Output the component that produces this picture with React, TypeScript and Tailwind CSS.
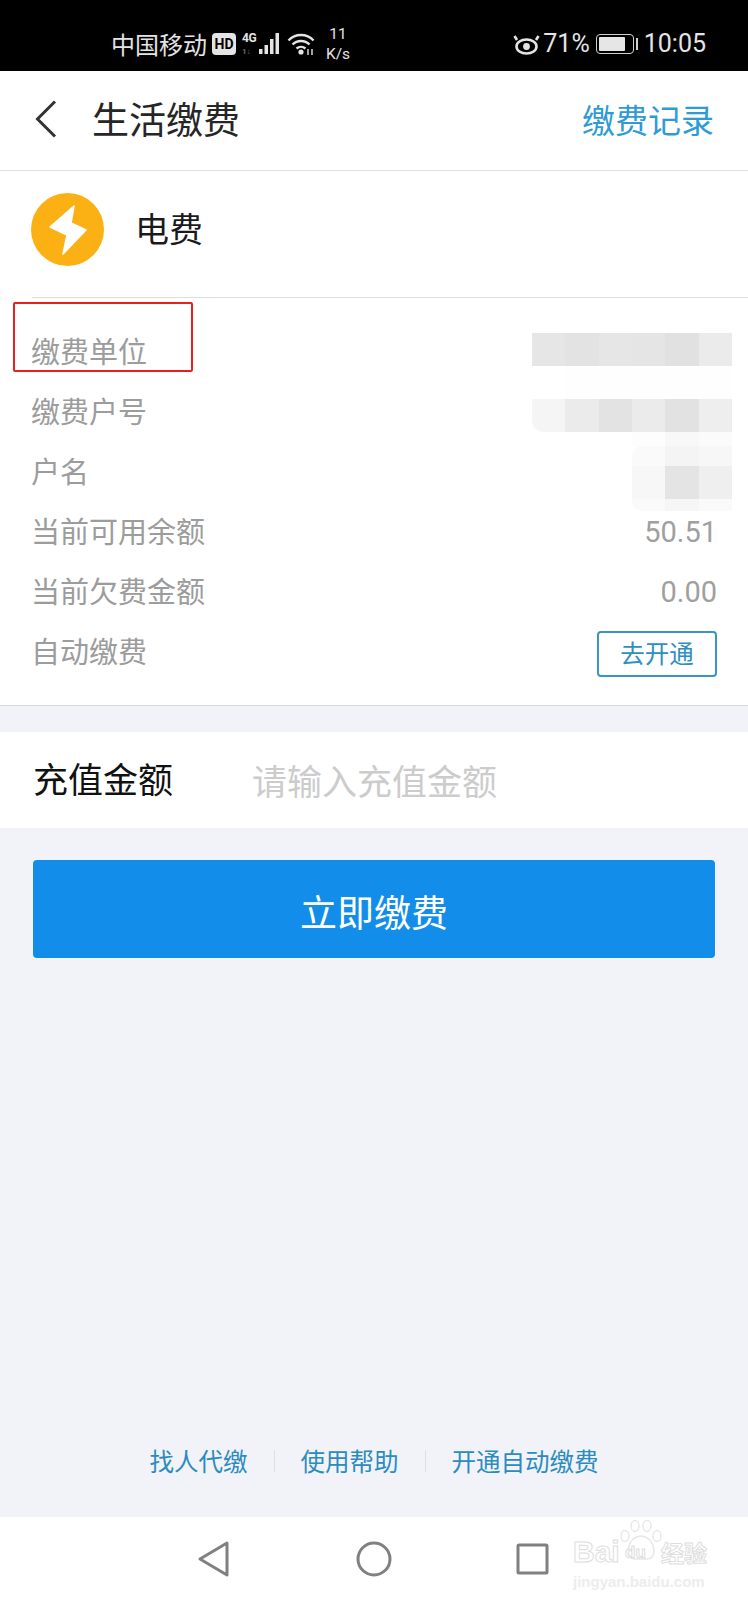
const cjk = "font-['Noto_Sans_CJK_SC','Noto_Sans',sans-serif]";

const rows = ["缴费单位", "缴费户号", "户名", "当前可用余额", "当前欠费金额"];

// mosaic that hides the account details, one array per band
const mosaic: string[][] = [
  ["bg-[#e6e6e6]", "bg-[#e3e3e3]", "bg-[#e6e6e6]", "bg-[#e5e5e5]", "bg-[#e1e1e1]", "bg-[#ebebeb]"],
  ["bg-white", "bg-[#fefefe]", "bg-[#fefefe]", "bg-[#fefefe]", "bg-[#fefefe]", "bg-[#fefefe]"],
  ["bg-[#f5f5f5] rounded-bl-[12px]", "bg-[#ebebeb]", "bg-[#e3e3e3]", "bg-[#ebebeb]", "bg-[#e2e2e2]", "bg-[#eeeeee]"],
  ["bg-white", "bg-white", "bg-white", "bg-[#fdfdfd]", "bg-[#f8f8f8]", "bg-[#fbfbfb]"],
  ["bg-white", "bg-white", "bg-white", "bg-[#fafafa] rounded-tl-[10px]", "bg-[#f4f4f4]", "bg-[#f7f7f7]"],
  ["bg-white", "bg-white", "bg-white", "bg-[#f7f7f7]", "bg-[#e4e4e4]", "bg-[#efefef]"],
  ["bg-white", "bg-white", "bg-white", "bg-[#fafafa] rounded-bl-[10px]", "bg-[#f6f6f6]", "bg-[#fafafa]"],
];

const StatusBar = () => (
  <div className="flex h-[71px] shrink-0 items-center justify-between bg-black pl-[111px] pr-[42px] pt-[16px] text-[#e4e4e4]">
    <div className="flex items-center">
      <span className={`${cjk} text-[24px] leading-none`}>中国移动</span>
      <span className="ml-[5px] flex h-[22px] w-[24px] items-center justify-center rounded-[4px] bg-[#e4e4e4] font-['Roboto',sans-serif] text-[14px] font-bold leading-none text-black">
        HD
      </span>
      <div className="ml-[6px] flex h-[24px] w-[15px] flex-col justify-between font-['Roboto',sans-serif] font-bold leading-none">
        <span className="text-[12px] tracking-[-0.5px]">4G</span>
        <span className="text-[8px] text-[#6a6a6a]">1↓</span>
      </div>
      <svg width="21" height="23" viewBox="0 0 21 23" fill="#e4e4e4" className="ml-[2px]">
        <rect x="0" y="17" width="3.5" height="5" />
        <rect x="5.5" y="13" width="3.5" height="9" />
        <rect x="11" y="7" width="3.5" height="15" />
        <rect x="16.5" y="1" width="3.5" height="21" />
      </svg>
      <svg width="28" height="24" viewBox="0 0 28 24" fill="none" stroke="#e4e4e4" strokeWidth="2.4" className="ml-[7px]">
        <path d="M1.5 8.5 A17 17 0 0 1 26.5 8.5" />
        <path d="M5.5 12.5 A12 12 0 0 1 22.5 12.5" />
        <path d="M9.5 16.5 A7 7 0 0 1 18.5 16.5" />
        <circle cx="14" cy="20" r="2.6" fill="#e4e4e4" stroke="none" />
        <path d="M21 17 L21 23 M25 17 L25 23" strokeWidth="1.4" />
      </svg>
      <div className="ml-[8px] flex w-[30px] flex-col items-center font-['Roboto',sans-serif] text-[15.5px] leading-[20px]">
        <span>11</span>
        <span>K/s</span>
      </div>
    </div>
    <div className="flex items-center font-['Roboto',sans-serif] text-[25px] font-normal leading-none">
      <svg width="27" height="22" viewBox="0 0 27 22" fill="none" stroke="#e4e4e4" strokeWidth="2.6">
        <ellipse cx="13.5" cy="13.5" rx="10" ry="7" />
        <circle cx="13.5" cy="13.5" r="3.4" fill="#e4e4e4" stroke="none" />
        <path d="M4 7 L1.5 3 M23 7 L25.5 3" />
      </svg>
      <span className="ml-[3px]">71%</span>
      <div className="ml-[6px] flex h-[20px] w-[38px] items-center rounded-[4px] border border-[#cfcfcf] p-[2px]">
        <div className="h-full w-[26px] rounded-[1px] bg-[#e6e6e6]" />
      </div>
      <div className="ml-[2px] h-[12px] w-[2px] bg-[#cfcfcf]" />
      <span className="ml-[6px]">10:05</span>
    </div>
  </div>
);

const App = () => {
  return (
    <main className={`${cjk} flex h-[1600px] w-[748px] flex-col overflow-hidden bg-[#f2f3f8]`}>
      <StatusBar />

      <header className="flex h-[100px] shrink-0 items-center border-b border-[#dddddd] bg-white pl-[35px] pr-[34px]">
        <svg width="22" height="38" viewBox="0 0 22 38" fill="none" stroke="#333333" strokeWidth="3" className="mb-[4px]">
          <path d="M20 1.5 L2.5 19 L20 36.5" />
        </svg>
        <h1 className="mb-[5px] ml-[35px] flex-1 text-[37px] font-normal leading-none text-[#262626]">生活缴费</h1>
        <span className="mb-[2px] text-[33px] leading-none text-[#2f9bd6]">缴费记录</span>
      </header>

      <section className="flex h-[126px] shrink-0 items-center bg-white pb-[9px] pl-[31px]">
        <div className="flex h-[73px] w-[73px] items-center justify-center rounded-full bg-[#fbb014]">
          <svg width="40" height="50" viewBox="0 0 40 50" fill="#ffffff" stroke="#ffffff" strokeWidth="1.5" strokeLinejoin="round">
            <path d="M26 1 L2 22 L19 30 L15 49 L38 25 L23 18 Z" />
          </svg>
        </div>
        <span className="mb-[3px] ml-[31px] text-[34px] leading-none text-[#1a1a1a]">电费</span>
      </section>

      <section className="relative shrink-0 border-b border-[#d8d8d8] bg-white pb-[23px] pl-[31px] pr-[31px] pt-[25px] before:absolute before:left-[32px] before:right-0 before:top-0 before:h-px before:bg-[#dddddd]">
        {rows.map((label) => (
          <div key={label} className="flex h-[60px] items-center justify-between text-[29px] leading-none text-[#9c9c9c]">
            <span className="pb-[3px]">{label}</span>
            {label === "当前可用余额" && <span className="font-['Roboto',sans-serif] text-[#a0a0a0]">50.51</span>}
            {label === "当前欠费金额" && <span className="font-['Roboto',sans-serif] text-[#a0a0a0]">0.00</span>}
          </div>
        ))}
        <div className="flex h-[60px] items-center justify-between text-[29px] leading-none text-[#9c9c9c]">
          <span className="pb-[3px]">自动缴费</span>
          <button
            type="button"
            className="mt-[3px] flex h-[46px] w-[120px] items-center justify-center rounded-[4px] border-2 border-[#3a94c4] text-[24.5px] leading-none text-[#2e8fc4]"
          >
            去开通
          </button>
        </div>

        <div className="absolute left-[532px] top-[36px] grid w-[200px] grid-cols-6 grid-rows-[33px_33px_33px_14px_20px_33px_12px]">
          {mosaic.flat().map((cell, i) => (
            <div key={i} className={cell} />
          ))}
        </div>

        <div className="absolute left-[13px] top-[5px] h-[70px] w-[180px] rounded-[2px] border-2 border-[#e8201e]" />
      </section>

      <section className="mt-[26px] flex h-[96px] shrink-0 items-center bg-white pl-[33px]">
        <span className="mb-[5px] w-[219px] text-[35px] leading-none text-[#111111]">充值金额</span>
        <span className="mb-[2px] text-[35px] leading-none text-[#cccccc]">请输入充值金额</span>
      </section>

      <div className="px-[33px] pt-[32px]">
        <button
          type="button"
          className="flex h-[98px] w-full items-center justify-center rounded-[4px] bg-[#128de9] pt-[4px] text-[37px] leading-none text-white"
        >
          立即缴费
        </button>
      </div>

      <div className="flex flex-1 items-end justify-center pb-[41px]">
        <div className="flex h-[30px] items-center text-[24.5px] leading-none text-[#2c8cbf]">
          <span>找人代缴</span>
          <span className="mx-[26px] h-[22px] w-px bg-[#dedfe3]" />
          <span>使用帮助</span>
          <span className="mx-[26px] h-[22px] w-px bg-[#dedfe3]" />
          <span>开通自动缴费</span>
        </div>
      </div>

      <nav className="relative flex h-[83px] shrink-0 items-center bg-white pl-[198px]">
        <svg width="32" height="36" viewBox="0 0 32 36" fill="none" stroke="#808080" strokeWidth="3" strokeLinejoin="round">
          <path d="M29 2 L2 18 L29 34 Z" />
        </svg>
        <svg width="36" height="36" viewBox="0 0 36 36" fill="none" stroke="#808080" strokeWidth="3" className="ml-[126px]">
          <circle cx="18" cy="18" r="16" />
        </svg>
        <svg width="33" height="32" viewBox="0 0 33 32" fill="none" stroke="#808080" strokeWidth="3" strokeLinejoin="round" className="ml-[124px]">
          <rect x="2" y="2" width="29" height="28" rx="1" />
        </svg>

        {/* baidu watermark */}
        <div className="absolute left-[573px] top-[3px] w-[136px] font-['Liberation_Sans',sans-serif] text-white">
          <svg width="44" height="40" viewBox="0 0 44 40" fill="none" stroke="#e8e8e8" strokeWidth="1.5" className="ml-[46px]">
            <ellipse cx="6" cy="16" rx="4" ry="5.5" />
            <ellipse cx="16" cy="6" rx="4" ry="5.5" />
            <ellipse cx="28" cy="6" rx="4" ry="5.5" />
            <ellipse cx="38" cy="16" rx="4" ry="5.5" />
            <path d="M9 30 Q11 17 22 16 Q33 17 35 30 Q35 39 28 39 L16 39 Q9 39 9 30 Z" />
          </svg>
          <div className="-mt-[23px] flex items-center text-[30px] font-bold leading-none [-webkit-text-stroke:1px_#dedede]">
            <span className="w-[52px]">Bai</span>
            <span className="w-[36px] text-[17px]">du</span>
            <span className={`${cjk} text-[23px] font-bold`}>经验</span>
          </div>
          <div className="mt-[7px] whitespace-nowrap text-[15px] font-bold leading-none text-[#ededed]">jingyan.baidu.com</div>
        </div>
      </nav>
    </main>
  );
};

export default App;
